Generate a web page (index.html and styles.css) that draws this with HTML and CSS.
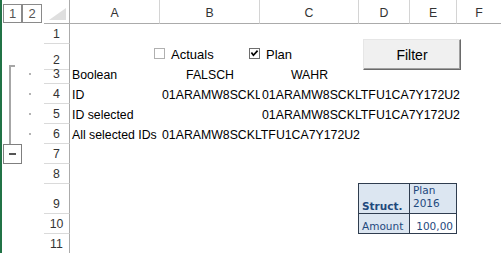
FILE: index.html
```html
<!DOCTYPE html>
<html lang="de">

<head>
  <meta charset="utf-8">
  <title>Filter sheet</title>
  <link rel="stylesheet" href="styles.css">
</head>

<body>
  <div class="sheet">
    <div class="row head">
      <div class="ol levels"><span class="lvl">1</span><span class="lvl">2</span></div>
      <div class="corner"><span class="tri"></span></div>
      <div class="colh">A</div>
      <div class="colh">B</div>
      <div class="colh">C</div>
      <div class="colh">D</div>
      <div class="colh">E</div>
      <div class="colh last">F</div>
    </div>

    <div class="row">
      <div class="ol"></div>
      <div class="rh">1</div>
    </div>

    <div class="row">
      <div class="ol"></div>
      <div class="rh">2</div>
      <div class="controls">
        <label class="chk actuals"><span class="box"></span>Actuals</label>
        <label class="chk plan">
          <svg class="box" width="11" height="11" viewBox="0 0 11 11">
            <rect x="0.5" y="0.5" width="10" height="10" fill="#fff" stroke="#6e6e6e"/>
            <path d="M2.4 4.6 L4.4 7.2 L8.6 2.6" fill="none" stroke="#000" stroke-width="1.7"/>
          </svg>Plan
        </label>
        <div class="btn">Filter</div>
      </div>
    </div>

    <div class="row">
      <div class="ol"><span class="br br-top"></span><span class="dot"></span></div>
      <div class="rh">3</div>
      <div class="c">Boolean</div>
      <div class="c mid">FALSCH</div>
      <div class="c mid">WAHR</div>
    </div>

    <div class="row">
      <div class="ol"><span class="br"></span><span class="dot"></span></div>
      <div class="rh">4</div>
      <div class="c">ID</div>
      <div class="c clip">01ARAMW8SCKLTFU1CA7Y172U2</div>
      <div class="c">01ARAMW8SCKLTFU1CA7Y172U2</div>
    </div>

    <div class="row">
      <div class="ol"><span class="br"></span><span class="dot"></span></div>
      <div class="rh">5</div>
      <div class="c">ID selected</div>
      <div class="c"></div>
      <div class="c">01ARAMW8SCKLTFU1CA7Y172U2</div>
    </div>

    <div class="row">
      <div class="ol"><span class="br"></span><span class="dot"></span></div>
      <div class="rh">6</div>
      <div class="c">All selected IDs</div>
      <div class="c">01ARAMW8SCKLTFU1CA7Y172U2</div>
    </div>

    <div class="row">
      <div class="ol"><span class="collapse"><span class="minus"></span></span></div>
      <div class="rh">7</div>
    </div>

    <div class="row">
      <div class="ol"></div>
      <div class="rh">8</div>
    </div>

    <div class="row tall">
      <div class="ol"></div>
      <div class="rh">9</div>
      <div class="c"></div>
      <div class="c"></div>
      <div class="c"></div>
      <div class="t t-head t-first"><b>Struct.</b></div>
      <div class="t t-head t-top">Plan 2016</div>
    </div>

    <div class="row">
      <div class="ol"></div>
      <div class="rh">10</div>
      <div class="c"></div>
      <div class="c"></div>
      <div class="c"></div>
      <div class="t t-first">Amount</div>
      <div class="t t-num">100,00</div>
    </div>

    <div class="row">
      <div class="ol"></div>
      <div class="rh">11</div>
    </div>
  </div>
</body>

</html>
```

FILE: styles.css
```css
* {
  box-sizing: border-box;
}

body {
  margin: 0;
  width: 501px;
  height: 253px;
  overflow: hidden;
  background-color: #fff;
  font-family: "Liberation Sans", Arial, sans-serif;
  font-size: 12.3px;
  color: #000;
}

.sheet {
  display: flex;
  flex-direction: column;
  height: 253px;
  border-left: 2px solid #217346;
}

.row {
  display: grid;
  grid-template-columns: 42px 26px 90px 100px 99px 51px 47px 44px;
  height: 20px;
  flex-shrink: 0;
}

.row.head {
  height: 24px;
}

.row.tall {
  height: 30px;
}

/* outline column */

.ol {
  display: flex;
}

.levels {
  padding: 4px 0 1px 1px;
}

.lvl {
  display: flex;
  align-items: center;
  justify-content: center;
  width: 19px;
  height: 19px;
  border: 1px solid #8a8a8a;
  color: #555;
  font-size: 13px;
}

.lvl + .lvl {
  width: 20px;
}

.br {
  width: 6px;
  margin-left: 7px;
  border-left: 2px solid #a6a6a6;
}

.br-top {
  margin-top: 1px;
  border-top: 2px solid #a6a6a6;
}

.dot {
  align-self: center;
  width: 2px;
  height: 2px;
  margin-left: 14px;
  background-color: #b4b4b4;
}

.collapse {
  display: flex;
  align-items: center;
  justify-content: center;
  width: 19px;
  height: 20px;
  margin-left: 1px;
  border: 1px solid #7f7f7f;
}

.minus {
  width: 7px;
  height: 2px;
  background-color: #555;
}

/* headers */

.corner {
  display: flex;
  align-items: flex-start;
  padding: 8px 0 0 5px;
  border-right: 1px solid #ababab;
  border-bottom: 1px solid #ababab;
}

.tri {
  width: 17px;
  height: 12px;
  background-color: #dfdfdf;
  clip-path: polygon(100% 0, 100% 100%, 0 100%);
}

.colh {
  display: flex;
  align-items: flex-end;
  justify-content: center;
  padding-bottom: 3px;
  border-right: 1px solid #d4d4d4;
  border-bottom: 1px solid #ababab;
  color: #333;
}

.colh.last {
  border-right: none;
}

.rh {
  display: flex;
  align-items: flex-end;
  justify-content: center;
  padding-bottom: 2px;
  line-height: 14px;
  border-right: 1px solid #ababab;
  border-bottom: 1px solid #dadada;
  color: #333;
}

/* cells */

.c {
  display: flex;
  align-items: flex-end;
  padding: 0 0 2px 2px;
  line-height: 14px;
  white-space: nowrap;
}

.c.mid {
  justify-content: center;
  padding-left: 0;
}

.c.clip {
  overflow: hidden;
}

/* form controls on row 2 */

.controls {
  grid-column: span 6;
  display: flex;
  align-items: flex-start;
  padding-left: 84px;
  font-size: 13px;
}

.chk {
  display: flex;
  align-items: flex-start;
  gap: 6px;
  margin-top: 3px;
  line-height: 15px;
}

.chk .box {
  flex-shrink: 0;
  width: 11px;
  height: 11px;
  margin-top: 1px;
}

.actuals {
  width: 95px;
}

.actuals .box {
  border: 1px solid #b0b0b0;
  background-color: #fff;
}

.plan {
  width: 114px;
}

.btn {
  display: flex;
  align-items: center;
  justify-content: center;
  width: 98px;
  height: 31px;
  margin-top: -5px;
  border: 1px solid;
  border-color: #e6e6e6 #6a6a6a #6a6a6a #e6e6e6;
  box-shadow: inset -1px -1px 0 #a0a0a0;
  background-color: #f0f0f0;
  font-size: 14px;
}

/* small report table */

.t {
  grid-column: auto;
  display: flex;
  align-items: flex-end;
  padding: 0 3px 0 3px;
  border-right: 1px solid #2f3d4f;
  border-bottom: 1px solid #2f3d4f;
  background-color: #dce6f1;
  font-family: "DejaVu Sans", Verdana, sans-serif;
  font-size: 10.5px;
  line-height: 13px;
  color: #1f497d;
  white-space: nowrap;
}

.t-first {
  margin-left: -1px;
  border-left: 1px solid #2f3d4f;
}

.t-head {
  margin-top: -1px;
  border-top: 1px solid #2f3d4f;
}

.t-top {
  align-items: flex-start;
  white-space: normal;
}

.t-num {
  justify-content: flex-end;
  background-color: #fff;
}
```
